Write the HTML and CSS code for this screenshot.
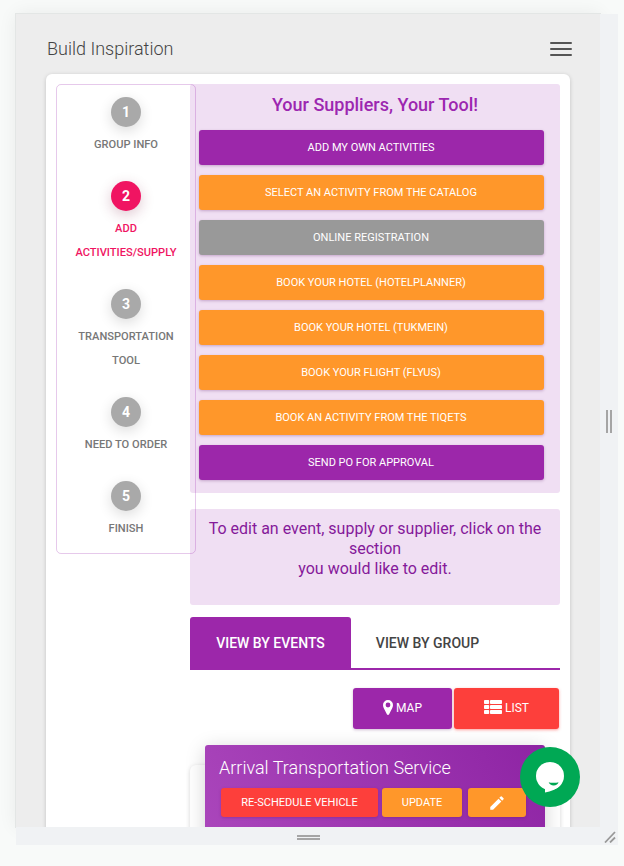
FILE: index.html
```html
<!DOCTYPE html>
<html lang="en">
<head>
<meta charset="utf-8">
<title>Build Inspiration</title>
<link rel="stylesheet" href="styles.css">
</head>
<body>
<div class="stage">
  <div class="screen">
    <header class="topbar">
      <h1>Build Inspiration</h1>
      <div class="burger"><i></i><i></i><i></i></div>
    </header>
    <main class="card">
      <ol class="steps">
        <li><b>1</b><span>GROUP INFO</span></li>
        <li class="active"><b>2</b><span>ADD<br>ACTIVITIES/SUPPLY</span></li>
        <li><b>3</b><span>TRANSPORTATION<br>TOOL</span></li>
        <li><b>4</b><span>NEED TO ORDER</span></li>
        <li><b>5</b><span>FINISH</span></li>
      </ol>
      <div class="content">
        <section class="panel tools">
          <h2>Your Suppliers, Your Tool!</h2>
          <div class="btn purple">ADD MY OWN ACTIVITIES</div>
          <div class="btn orange">SELECT AN ACTIVITY FROM THE CATALOG</div>
          <div class="btn gray">ONLINE REGISTRATION</div>
          <div class="btn orange">BOOK YOUR HOTEL (HOTELPLANNER)</div>
          <div class="btn orange">BOOK YOUR HOTEL (TUKMEIN)</div>
          <div class="btn orange">BOOK YOUR FLIGHT (FLYUS)</div>
          <div class="btn orange">BOOK AN ACTIVITY FROM THE TIQETS</div>
          <div class="btn purple">SEND PO FOR APPROVAL</div>
        </section>
        <section class="panel hint">To edit an event, supply or supplier, click on the section<br>you would like to edit.</section>
        <nav class="tabs">
          <div class="tab selected">VIEW BY EVENTS</div>
          <div class="tab">VIEW BY GROUP</div>
        </nav>
        <div class="views">
          <div class="btn purple map">
            <svg width="10" height="16" viewBox="0 0 10 16"><path fill="#fff" fill-rule="evenodd" d="M5 0a5 5 0 0 1 5 5c0 1.200-.3 2-.7 2.900L6.100 14.300c-.5.900-1.700.9-2.200 0L.7 7.900C.3 7 0 6.200 0 5a5 5 0 0 1 5-5zm0 2.600a2.400 2.400 0 1 0 0 4.800 2.400 2.400 0 0 0 0-4.800z"/></svg>
            <span>MAP</span>
          </div>
          <div class="btn red list">
            <svg width="18" height="14" viewBox="0 0 18 14" fill="#fff"><rect width="5.200" height="4" rx=".8"/><rect x="6" width="12" height="4" rx=".8"/><rect y="5" width="5.200" height="4" rx=".8"/><rect x="6" y="5" width="12" height="4" rx=".8"/><rect y="10" width="5.200" height="4" rx=".8"/><rect x="6" y="10" width="12" height="4" rx=".8"/></svg>
            <span>LIST</span>
          </div>
        </div>
        <article class="event">
          <div class="event-head">
            <h3>Arrival Transportation Service</h3>
            <div class="actions">
              <div class="btn red reschedule">RE-SCHEDULE VEHICLE</div>
              <div class="btn orange update">UPDATE</div>
              <div class="btn orange edit"><svg width="18" height="18" viewBox="0 0 24 24"><path fill="#fff" d="M3 17.250V21h3.750L17.810 9.940l-3.750-3.750L3 17.250zM20.710 7.040a1 1 0 0 0 0-1.410l-2.340-2.340a1 1 0 0 0-1.410 0l-1.830 1.830 3.750 3.750 1.830-1.830z"/></svg></div>
            </div>
          </div>
        </article>
      </div>
    </main>
  </div>
  <div class="grip-right"><i></i><i></i></div>
  <div class="grip-bottom"><i></i><i></i></div>
  <div class="grip-corner"><svg width="12" height="12" viewBox="0 0 12 12"><path d="M1 11.500 11 1M6 11.500l5-5" stroke="#999" stroke-width="1.800" fill="none"/></svg></div>
  <div class="chat"><svg width="60" height="60" viewBox="0 0 60 60"><circle cx="30" cy="30" r="30" fill="#00a854"/><circle cx="30" cy="29" r="14" fill="#fff"/><path fill="#fff" d="M25 41v4.400c6-.9 11.500-3 15-6.800L34 37z"/><path fill="#00a854" d="M28.700 35.200c1.800.7 7.800.7 9.800 0-.3 2-2.400 3.200-4.800 3.200s-4.500-1.200-5-3.200z"/></svg></div>
</div>
</body>
</html>
```

FILE: styles.css
```css
* { box-sizing: border-box; }
body {
  margin: 0;
  width: 624px;
  height: 866px;
  overflow: hidden;
  background: #f8faf9;
  font-family: Roboto, sans-serif;
}
.stage {
  position: relative;
  display: grid;
  grid-template: 813px 18px / 584px 18px;
  width: 602px;
  margin: 14px 0 0 16px;
}
.screen {
  overflow: hidden;
  background: #ededed;
  box-shadow: 0 0 0 1px #e3e6e5, 0 0 18px rgba(0, 0, 0, .07);
}
h1, h2, h3 { margin: 0; }
.topbar {
  display: flex;
  justify-content: space-between;
  height: 60px;
  padding: 23px 28px 0 31px;
}
.topbar h1 {
  color: #444;
  font-size: 18px;
  font-weight: 300;
  line-height: 24px;
}
.burger {
  display: flex;
  flex-direction: column;
  gap: 4px;
  padding-top: 5px;
}
.burger i { width: 22px; height: 2px; border-radius: 1px; background: #555; }
.card {
  display: flex;
  align-items: flex-start;
  width: 524px;
  height: 800px;
  margin-left: 30px;
  padding: 10px;
  border-radius: 6px;
  background: #fff;
  box-shadow: 0 1px 4px rgba(0, 0, 0, .18);
}
.steps {
  position: relative;
  z-index: 1;
  flex: none;
  display: flex;
  flex-direction: column;
  gap: 24px;
  width: 140px;
  height: 470px;
  margin: 0 -6px 0 0;
  padding: 12px 0 0;
  border: 1px solid rgba(156, 39, 176, .25);
  border-radius: 5px;
  list-style: none;
}
.steps li {
  display: flex;
  flex-direction: column;
  align-items: center;
  gap: 6px;
  color: #777;
  font-size: 11.100px;
  font-weight: 500;
  line-height: 24px;
  text-align: center;
}
.steps b {
  width: 30px;
  height: 30px;
  border-radius: 50%;
  background: #a9a9a9;
  box-shadow: 0 4px 14px rgba(0, 0, 0, .14);
  color: #fff;
  font-size: 14px;
  font-weight: 700;
  line-height: 30px;
}
.steps .active { color: #f01462; }
.steps .active b { background: #f01462; box-shadow: 0 4px 14px rgba(120, 20, 60, .24); }
.content { width: 370px; }
.panel { border-radius: 3px; background: #f0dff3; }
.tools {
  display: flex;
  flex-direction: column;
  gap: 10px;
  height: 409px;
  padding: 9px 16px 0 9px;
}
.tools h2 {
  height: 27px;
  margin-right: -7px;
  color: #9c27b0;
  font-size: 18px;
  font-weight: 500;
  line-height: 24px;
  text-align: center;
}
.btn {
  display: flex;
  align-items: center;
  justify-content: center;
  height: 35px;
  border-radius: 3px;
  box-shadow: 0 1px 3px rgba(90, 20, 100, .28);
  color: #fff;
  font-size: 11px;
}
.tools .btn { padding-right: 1px; }
.purple { background: #9c27aa; }
.orange { background: #ff972a; }
.gray { background: #999; }
.red { background: #fd3f3b; }
.hint {
  height: 96px;
  margin-top: 16px;
  padding: 10px 15px;
  color: #85199a;
  font-size: 16px;
  line-height: 20px;
  text-align: center;
}
.tabs {
  display: flex;
  height: 53px;
  margin-top: 12px;
  border-bottom: 2px solid #9c27aa;
}
.tab {
  width: 161px;
  height: 51px;
  padding-right: 8px;
  color: #444;
  font-size: 14px;
  font-weight: 500;
  line-height: 52px;
  text-align: center;
}
.tab.selected {
  padding-right: 0;
  border-radius: 3px 3px 0 0;
  background: #9c27aa;
  color: #fff;
}
.views {
  display: flex;
  justify-content: flex-end;
  gap: 2px;
  margin: 18px 1px 0 0;
}
.views .btn { gap: 3px; height: 41px; padding-bottom: 1px; font-size: 12px; }
.views svg { flex: none; }
.views .list svg { margin-top: -2px; }
.map { width: 99px; }
.list { width: 105px; }
.list.red { box-shadow: 0 1px 3px rgba(253, 63, 59, .5); }
.event {
  height: 120px;
  margin-top: 36px;
  padding: 0 15px;
  border-radius: 6px;
  box-shadow: 0 1px 4px rgba(0, 0, 0, .16);
}
.event-head {
  position: relative;
  top: -20px;
  height: 110px;
  padding: 11px 15px 0;
  border-radius: 3px;
  background: linear-gradient(60deg, #ab47bc, #8e24a4);
  box-shadow: 0 4px 20px rgba(0, 0, 0, .18);
}
.event-head h3 {
  margin-left: -1px;
  color: #fff;
  font-size: 18px;
  font-weight: 300;
  line-height: 24px;
}
.actions { display: flex; margin: 8px 0 0 1px; }
.actions .btn { height: 29px; }
.reschedule { width: 157px; }
.update { width: 80px; margin-left: 4px; }
.edit { width: 58px; margin-left: 6px; }
.grip-right, .grip-bottom, .grip-corner {
  display: flex;
  align-items: center;
  justify-content: center;
  background: #f0f2f4;
}
.grip-right { gap: 2px; padding-top: 2px; }
.grip-right i { width: 2px; height: 23px; background: #a5a5a5; }
.grip-bottom { flex-direction: column; gap: 1px; padding: 2px 0 0 1px; }
.grip-bottom i { width: 23px; height: 2px; background: #a5a5a5; }
.grip-corner { padding: 2px 0 0 1px; }
.chat {
  position: absolute;
  z-index: 2;
  top: 733px;
  left: 504px;
  width: 60px;
  height: 60px;
}
.chat svg { display: block; }
```
